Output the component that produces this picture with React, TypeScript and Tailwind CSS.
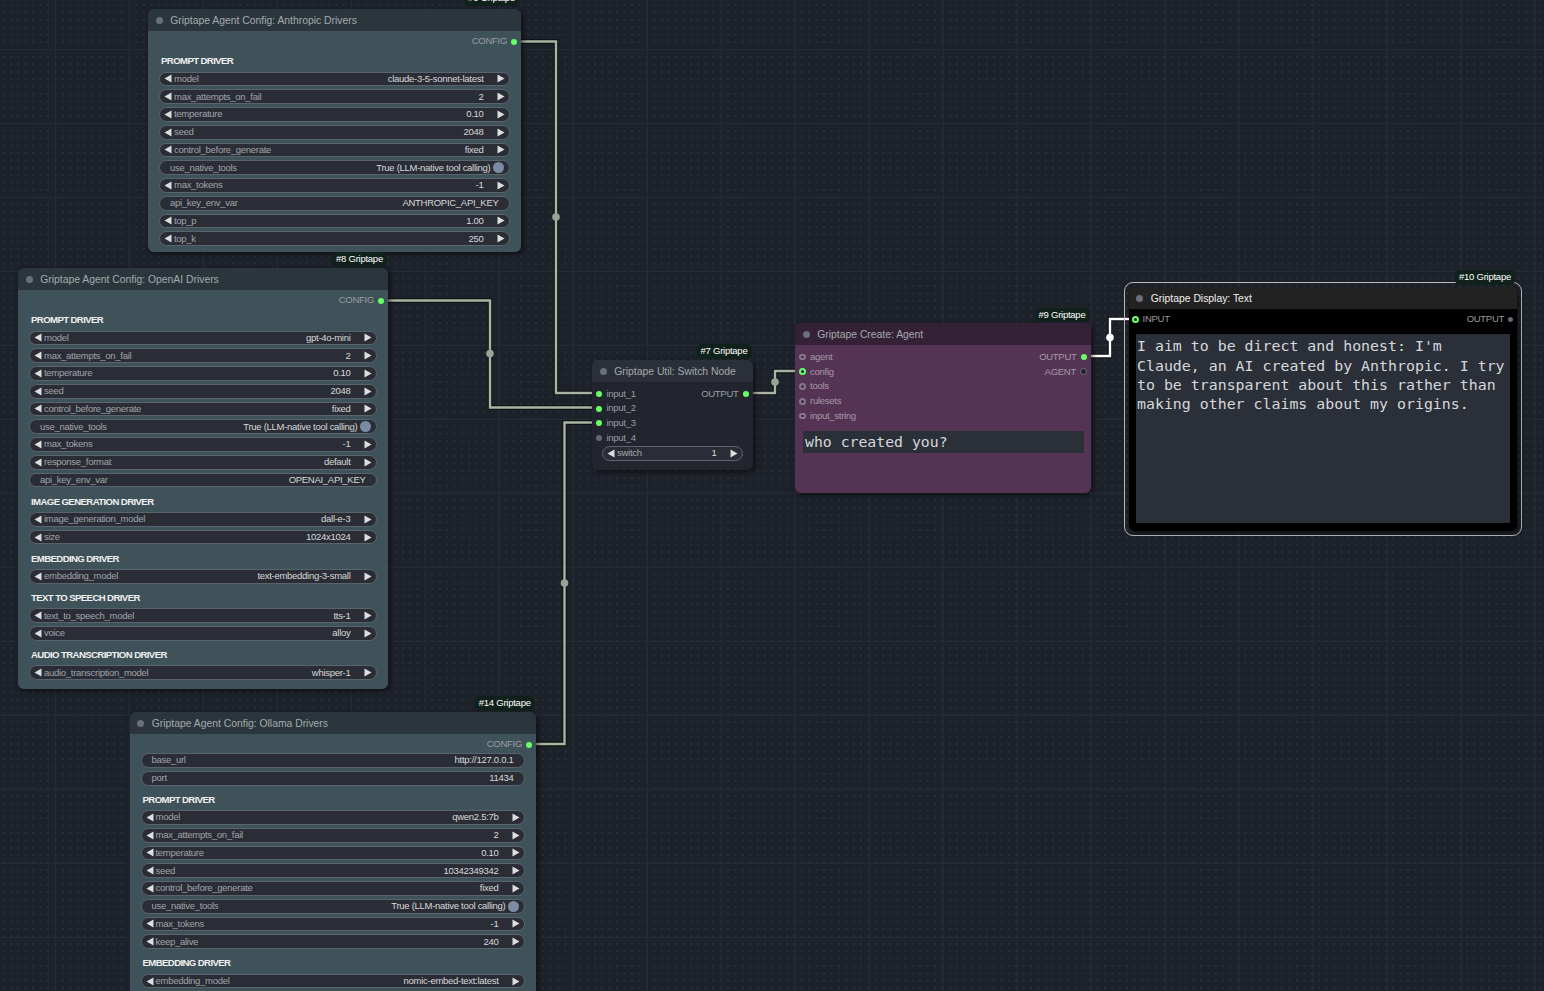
import type { ReactNode } from "react";

type Row =
  | { kind: "head"; label: string }
  | { kind: "combo"; label: string; value: string }
  | { kind: "text"; label: string; value: string }
  | { kind: "toggle"; label: string; value: string };

const combo = (label: string, value: string): Row => ({ kind: "combo", label, value });
const text = (label: string, value: string): Row => ({ kind: "text", label, value });
const toggle = (label: string, value: string): Row => ({ kind: "toggle", label, value });
const head = (label: string): Row => ({ kind: "head", label });

const anthropicRows: Row[] = [
  head("PROMPT DRIVER"),
  combo("model", "claude-3-5-sonnet-latest"),
  combo("max_attempts_on_fail", "2"),
  combo("temperature", "0.10"),
  combo("seed", "2048"),
  combo("control_before_generate", "fixed"),
  toggle("use_native_tools", "True (LLM-native tool calling)"),
  combo("max_tokens", "-1"),
  text("api_key_env_var", "ANTHROPIC_API_KEY"),
  combo("top_p", "1.00"),
  combo("top_k", "250"),
];

const openaiRows: Row[] = [
  head("PROMPT DRIVER"),
  combo("model", "gpt-4o-mini"),
  combo("max_attempts_on_fail", "2"),
  combo("temperature", "0.10"),
  combo("seed", "2048"),
  combo("control_before_generate", "fixed"),
  toggle("use_native_tools", "True (LLM-native tool calling)"),
  combo("max_tokens", "-1"),
  combo("response_format", "default"),
  text("api_key_env_var", "OPENAI_API_KEY"),
  head("IMAGE GENERATION DRIVER"),
  combo("image_generation_model", "dall-e-3"),
  combo("size", "1024x1024"),
  head("EMBEDDING DRIVER"),
  combo("embedding_model", "text-embedding-3-small"),
  head("TEXT TO SPEECH DRIVER"),
  combo("text_to_speech_model", "tts-1"),
  combo("voice", "alloy"),
  head("AUDIO TRANSCRIPTION DRIVER"),
  combo("audio_transcription_model", "whisper-1"),
];

const ollamaRows: Row[] = [
  text("base_url", "http://127.0.0.1"),
  text("port", "11434"),
  head("PROMPT DRIVER"),
  combo("model", "qwen2.5:7b"),
  combo("max_attempts_on_fail", "2"),
  combo("temperature", "0.10"),
  combo("seed", "10342349342"),
  combo("control_before_generate", "fixed"),
  toggle("use_native_tools", "True (LLM-native tool calling)"),
  combo("max_tokens", "-1"),
  combo("keep_alive", "240"),
  head("EMBEDDING DRIVER"),
  combo("embedding_model", "nomic-embed-text:latest"),
];

function Arrow({ right }: { right?: boolean }) {
  return (
    <svg width="8" height="9" viewBox="0 0 8 9" className="shrink-0">
      <polygon points={right ? "0.5,0.5 7.5,4.5 0.5,8.5" : "7.5,0.5 0.5,4.5 7.5,8.5"} fill="#dddddd" />
    </svg>
  );
}

function Widget({ row }: { row: Row }) {
  if (row.kind === "head") {
    return (
      <div className="flex h-[18.6px] items-center pl-[2px] pt-[4.6px] text-[9.6px] font-bold tracking-[-0.6px] text-[#f0f0f0]">
        {row.label}
      </div>
    );
  }
  return (
    <div className="flex h-[14.8px] shrink-0 items-center rounded-full border border-[#59656d] bg-[#2a2d36] text-[9.5px] tracking-[-0.28px]">
      {row.kind === "combo" && (
        <div className="flex w-full items-center pl-[4px] pr-[4.5px]">
          <Arrow />
          <span className="ml-[2px] text-[#a2a4a8]">{row.label}</span>
          <span className="ml-auto mr-[13px] text-[#d8d8d8]">{row.value}</span>
          <Arrow right />
        </div>
      )}
      {row.kind === "text" && (
        <div className="flex w-full items-center justify-between pl-[10px] pr-[10.5px]">
          <span className="text-[#a2a4a8]">{row.label}</span>
          <span className="text-[#d8d8d8]">{row.value}</span>
        </div>
      )}
      {row.kind === "toggle" && (
        <div className="flex w-full items-center pl-[10px] pr-[5.5px]">
          <span className="text-[#a2a4a8]">{row.label}</span>
          <span className="ml-auto mr-[2px] text-[#d8d8d8]">{row.value}</span>
          <span className="h-[11px] w-[11px] rounded-full bg-[#7b8ba3]" />
        </div>
      )}
    </div>
  );
}

function Badge({ label, className }: { label: string; className: string }) {
  return (
    <div
      className={`absolute flex items-center justify-center rounded-[5px] bg-[#10201a] text-[9.5px] tracking-[-0.25px] text-white ${className}`}
    >
      {label}
    </div>
  );
}

function Node({
  title,
  className,
  titleClass,
  titleText = "text-[#a4a9ad]",
  bodyClass,
  children,
}: {
  title: string;
  className: string;
  titleClass: string;
  titleText?: string;
  bodyClass: string;
  children: ReactNode;
}) {
  return (
    <div className={`absolute flex flex-col overflow-hidden rounded-[6px] shadow-[2px_2px_5px_rgba(0,0,0,0.55)] ${className}`}>
      <div className={`flex h-[22.2px] shrink-0 items-center pl-[7.5px] pt-[1px] ${titleClass}`}>
        <span className="h-[7.4px] w-[7.4px] shrink-0 rounded-full bg-[#6b6e7b]" />
        <span className={`ml-[7.4px] whitespace-nowrap text-[10.36px] ${titleText}`}>{title}</span>
      </div>
      <div className={`min-h-0 flex-1 ${bodyClass}`}>{children}</div>
    </div>
  );
}

function ConfigNode({
  title,
  rows,
  className,
}: {
  title: string;
  rows: Row[];
  className: string;
}) {
  return (
    <Node title={title} className={className} titleClass="bg-[#2a363b]" bodyClass="bg-[#3f5159]">
      <div className="flex flex-col gap-[2.96px] px-[11px] pt-[3.9px]">
        <div className="-mb-[1px] flex h-[13px] items-center justify-end gap-[4px] text-[9.5px] tracking-[-0.28px] text-[#9a9ea1]">
          <span>CONFIG</span>
          <span className="-mr-[7px] h-[6px] w-[6px] rounded-full bg-[#66ff66]" />
        </div>
        {rows.map((row) => (
          <Widget key={row.label} row={row} />
        ))}
      </div>
    </Node>
  );
}

function SlotDot({ state }: { state: "on" | "off" | "ring" | "hollow" | "dark" }) {
  if (state === "on") return <span className="h-[6px] w-[6px] shrink-0 rounded-full bg-[#66ff66]" />;
  if (state === "off") return <span className="h-[6px] w-[6px] shrink-0 rounded-full bg-[#666677]" />;
  if (state === "ring")
    return <span className="h-[6.6px] w-[6.6px] shrink-0 rounded-full border-[2px] border-[#66ff66] bg-[#222222]" />;
  if (state === "dark")
    return <span className="h-[6.6px] w-[6.6px] shrink-0 rounded-full border-[1.5px] border-[#727284] bg-[#222222]" />;
  return <span className="h-[6.6px] w-[6.6px] shrink-0 rounded-full border-[2px] border-[#87778c] bg-[#3d2b3f]" />;
}

function Wire({ d, dot, white }: { d: string; dot: [number, number]; white?: boolean }) {
  return (
    <g>
      <path d={d} fill="none" stroke="#000000" strokeOpacity="0.6" strokeWidth="4.4" />
      <path d={d} fill="none" stroke={white ? "#ffffff" : "#a9b5a2"} strokeWidth="2.4" />
      <circle cx={dot[0]} cy={dot[1]} r="3.8" fill={white ? "#ffffff" : "#98a494"} />
    </g>
  );
}

export default function App() {
  return (
    <div className="relative h-[991px] w-[1544px] overflow-hidden bg-[#1d2129] bg-[linear-gradient(#262a33_1.5px,transparent_1.5px),linear-gradient(90deg,#262a33_1.5px,transparent_1.5px),radial-gradient(#2b2f38_0.7px,transparent_0.8px)] bg-[size:74px_74px,74px_74px,7.4px_7.4px] bg-[position:55px_49px,55px_49px,0px_1.5px] font-['Liberation_Sans',Arial,sans-serif]">
      <svg className="absolute inset-0" width="1544" height="991">
        <Wire d="M515 41.5H556V393H598" dot={[556, 217]} />
        <Wire d="M382 300.5H490V407.5H598" dot={[490, 353.5]} />
        <Wire d="M530 744H564.5V422.5H598" dot={[564.5, 583]} />
        <Wire d="M747 393H775V371H802" dot={[775, 382]} />
        <Wire d="M1085 356H1110V319H1135" dot={[1110, 337.5]} white />
      </svg>

      <ConfigNode
        title="Griptape Agent Config: Anthropic Drivers"
        rows={anthropicRows}
        className="left-[148px] top-[9px] h-[243px] w-[373px]"
      />
      <Badge label="#6 Griptape" className="left-[464px] top-[-9px] h-[15px] w-[55px]" />

      <ConfigNode
        title="Griptape Agent Config: OpenAI Drivers"
        rows={openaiRows}
        className="left-[18px] top-[268px] h-[421px] w-[370px]"
      />
      <Badge label="#8 Griptape" className="left-[332px] top-[252px] h-[15px] w-[55px]" />

      <ConfigNode
        title="Griptape Agent Config: Ollama Drivers"
        rows={ollamaRows}
        className="left-[129.5px] top-[712px] h-[300px] w-[406.5px]"
      />
      <Badge label="#14 Griptape" className="left-[474.5px] top-[695.5px] h-[15px] w-[60.5px]" />

      <Node
        title="Griptape Util: Switch Node"
        className="left-[592px] top-[360px] h-[110px] w-[161px]"
        titleClass="bg-[#2b2f38]"
        bodyClass="bg-[#22252e]"
      >
        <div className="flex flex-col px-[4px] pt-[4.5px] text-[9.5px] tracking-[-0.28px] text-[#9a9ea1]">
          <div className="flex h-[14.6px] items-center gap-[4.5px]">
            <SlotDot state="on" />
            <span>input_1</span>
            <span className="ml-auto">OUTPUT</span>
            <SlotDot state="on" />
          </div>
          {["input_2", "input_3"].map((name) => (
            <div key={name} className="flex h-[14.6px] items-center gap-[4.5px]">
              <SlotDot state="on" />
              <span>{name}</span>
            </div>
          ))}
          <div className="flex h-[14.6px] items-center gap-[4.5px]">
            <SlotDot state="off" />
            <span>input_4</span>
          </div>
          <div className="mx-[6px] mt-[1px]">
            <Widget row={combo("switch", "1")} />
          </div>
        </div>
      </Node>
      <Badge label="#7 Griptape" className="left-[696.5px] top-[344px] h-[14.5px] w-[55px]" />

      <Node
        title="Griptape Create: Agent"
        className="left-[795px] top-[323px] h-[170px] w-[296px]"
        titleClass="bg-[#352136]"
        bodyClass="bg-[#553355]"
      >
        <div className="flex flex-col px-[4px] pt-[4.3px] text-[9.5px] tracking-[-0.28px] text-[#a49aa6]">
          <div className="flex h-[14.8px] items-center gap-[4.5px]">
            <SlotDot state="hollow" />
            <span>agent</span>
            <span className="ml-auto">OUTPUT</span>
            <SlotDot state="on" />
          </div>
          <div className="flex h-[14.8px] items-center gap-[4.5px]">
            <SlotDot state="ring" />
            <span>config</span>
            <span className="ml-auto">AGENT</span>
            <SlotDot state="dark" />
          </div>
          {["tools", "rulesets", "input_string"].map((name) => (
            <div key={name} className="flex h-[14.8px] items-center gap-[4.5px]">
              <SlotDot state="hollow" />
              <span>{name}</span>
            </div>
          ))}
          <div className="ml-[4px] mr-[3px] mt-[7.8px] flex h-[22px] items-center bg-[#2b2f38] pl-[2px] font-['DejaVu_Sans_Mono',monospace] text-[14.8px] tracking-normal text-[#d5d8dc]">
            who created you?
          </div>
        </div>
      </Node>
      <Badge label="#9 Griptape" className="left-[1034.5px] top-[307.5px] h-[14.5px] w-[55px]" />

      <div className="absolute left-[1123.5px] top-[281.5px] h-[254px] w-[398px] rounded-[9px] border-[1.5px] border-[#b8babd]" />
      <Node
        title="Griptape Display: Text"
        className="left-[1128.5px] top-[286.7px] h-[244px] w-[388px]"
        titleClass="bg-[#222222]"
        titleText="text-[#f0f0f0]"
        bodyClass="bg-[#000000]"
      >
        <div className="flex h-full flex-col px-[3.5px] pt-[3.5px] text-[9.5px] tracking-[-0.28px] text-[#9a9a9a]">
          <div className="flex h-[14px] items-center gap-[4px]">
            <SlotDot state="ring" />
            <span>INPUT</span>
            <span className="ml-auto">OUTPUT</span>
            <span className="h-[5px] w-[5px] shrink-0 rounded-full bg-[#666677]" />
          </div>
          <div className="ml-[4px] mr-[3.5px] mt-[8px] h-[189px] bg-[#2b2f38] pl-[1px] pt-[3px] font-['DejaVu_Sans_Mono',monospace] text-[14.9px] leading-[19.3px] tracking-normal text-[#d5d8dc]">
            I aim to be direct and honest: I'm
            <br />
            Claude, an AI created by Anthropic. I try
            <br />
            to be transparent about this rather than
            <br />
            making other claims about my origins.
          </div>
        </div>
      </Node>
      <Badge label="#10 Griptape" className="left-[1455px] top-[270px] h-[15px] w-[60px]" />
    </div>
  );
}
